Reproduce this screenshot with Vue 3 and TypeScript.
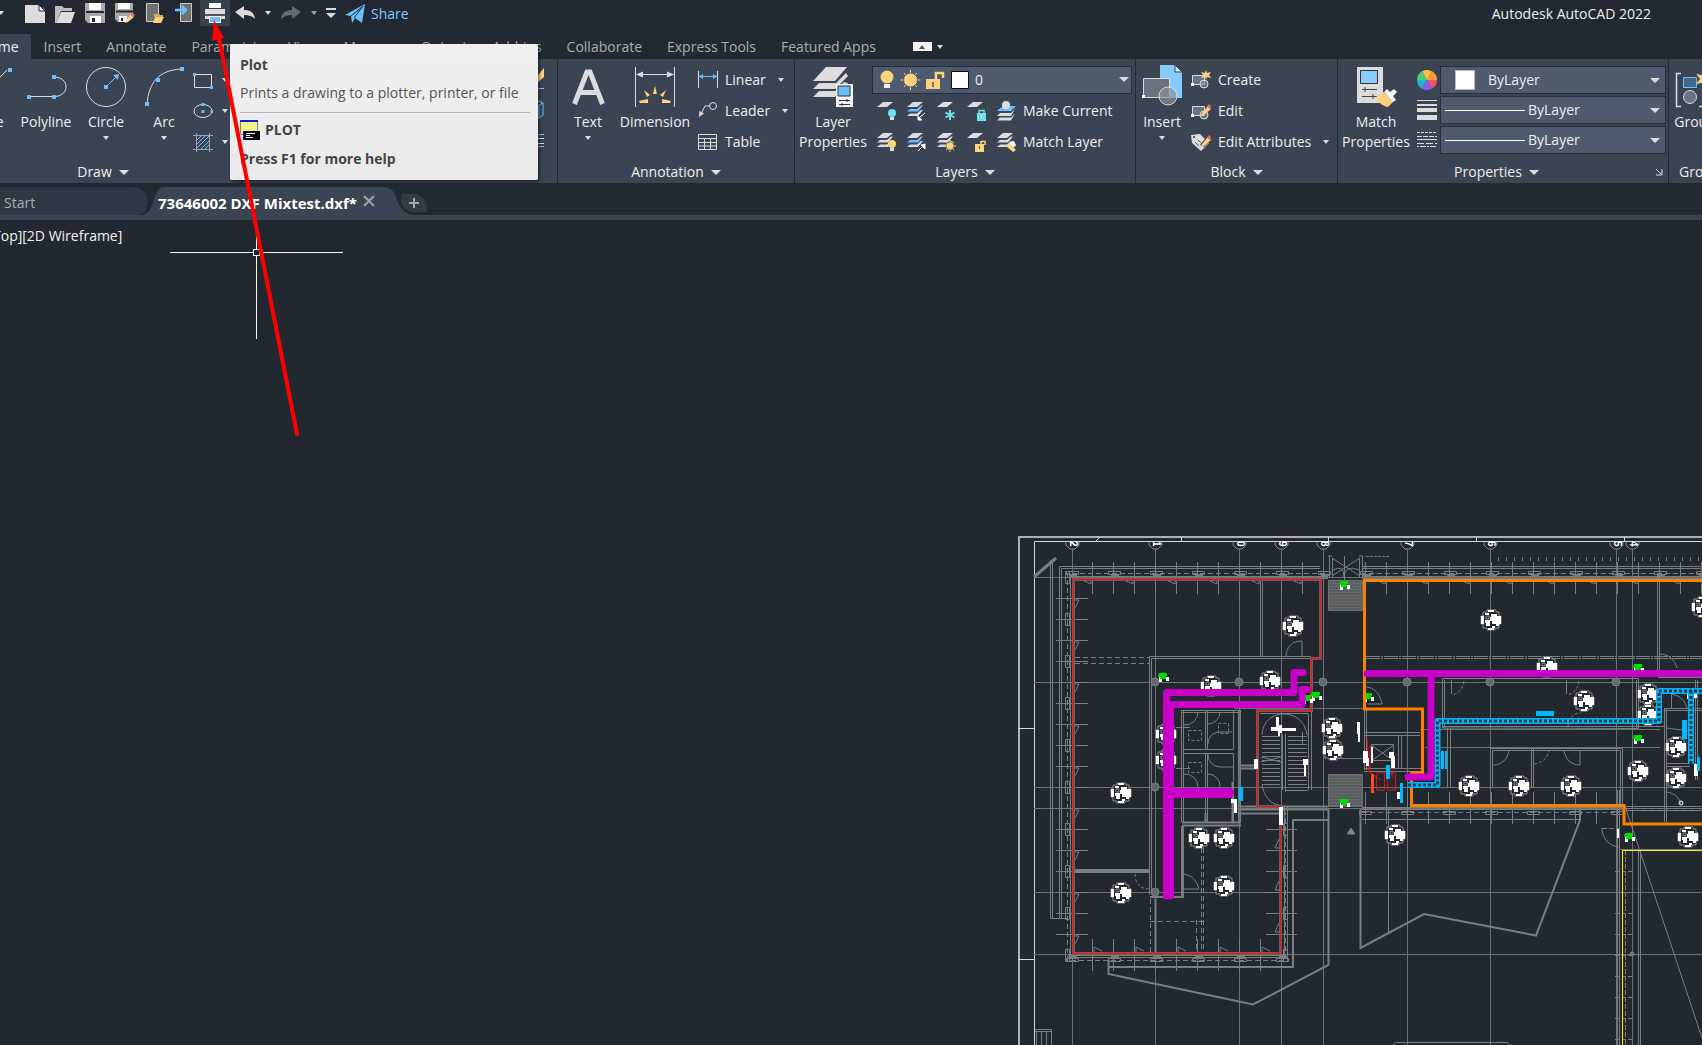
<script setup lang="ts">
import { ref } from 'vue'

const G = '#dcdcdc'
const B = '#6cc0ff'
const Y = '#fdd27a'
const T = '#6fdfe8'

const sheet = (y: number, fill: string) =>
  `<path d="M1 ${y + 5}L7 ${y}H17L11 ${y + 5}Z" fill="${fill}"/>`
const stack = (mid: string) =>
  `${sheet(1, G)}<path d="M1 10.500L4 8H11L15 4.500H17L12 10.500Z" fill="${mid}"/><path d="M1 15L4 12.500H11L15 9H17L12 15Z" fill="${G}"/>`
const bulb = (c: string) =>
  `<circle cx="16" cy="12" r="4" fill="${c}"/><path d="M14 16h4v3h-4z" fill="${G}"/>`
const pencil = `<path d="M11 12l6-7 3 3-7 6-3 1z" fill="${Y}"/><path d="M16 5l2-2 2 2-1 3z" fill="#f25e5e"/>`
const blockBase = `<path d="M1.500 5.500h12v9h-12z" fill="#6b7280" stroke="${G}"/><circle cx="13" cy="14" r="4" fill="#8a8f98" fill-opacity=".6" stroke="${G}"/><path d="M0 13h3v3H0z" fill="#fff"/>`

const icons: Record<string, string> = {
  fresh: `<path d="M0 2h14l6 5v13H0z" fill="${G}"/><path d="M14 2v6h6z" fill="#fff" stroke="#222933"/>`,
  open: `<path d="M0 3h7l2 2h8v3H6L1 20H0z" fill="#bdbdbd"/><path d="M6 9h14l-4 11H1z" fill="${G}"/>`,
  save: `<path d="M0 0h20v20H3l-3-3z" fill="#aaa"/><path d="M4 0h12v7H4z" fill="#fff"/><path d="M1 9h18" stroke="#222933" stroke-width="2"/><path d="M5 13h11v7H5z" fill="#fff"/><path d="M7 15h3v4H7z" fill="#222933"/>`,
  saveAs: `<path d="M0 0h18v10l-8 9H3l-3-3z" fill="#aaa"/><path d="M3 0h12v6H3z" fill="#fff"/><path d="M1 8.500h17" stroke="#222933" stroke-width="2"/><path d="M4 13h8v6H4z" fill="#fff"/><path d="M6 15h2v3H6z" fill="#222933"/><path d="M11 17l5-6 3 3-6 5-3 1z" fill="${Y}"/><path d="M15.500 11.500l2-2 2.500 2.500-2 2z" fill="#f25e5e"/>`,
  openWeb: `<path d="M1.500.500h12v18h-12z" fill="#707070" stroke="#c9c9c9"/><path d="M9 11h5l1 1h3v2H9z" fill="#d9a94e"/><path d="M10 14h9l-3 6H8z" fill="${Y}"/>`,
  saveWeb: `<path d="M5.500.500h11v18h-11z" fill="#707070" stroke="#c9c9c9"/><path d="M0 7h10M7 3l4 4-4 4" stroke="${B}" stroke-width="2.500" fill="none"/>`,
  plot: `<path d="M4 0h12v5H4z" fill="#fff"/><path d="M0 6h20v10H0z" fill="${G}"/><path d="M0 11h20v2H0z" fill="#555"/><path d="M4 13h12v7H4z" fill="#fff"/><path d="M5 14h10v5H5z" fill="${B}"/>`,
  undo: `<path d="M0 9l9-6v4c6 0 10 2 11 9-3-3-6-4-11-4v4z" fill="${G}"/>`,
  redo: `<path d="M20 9l-9-6v4C5 7 1 9 0 16c3-3 6-4 11-4v4z" fill="#666b74"/>`,
  customise: `<path d="M0 5h10v2H0z" fill="${G}"/><path d="M0 10h10l-5 5z" fill="${G}"/>`,
  plane: `<path d="M0 11L20 0l-3 19-7-5-3 5-1-7z" fill="${B}"/><path d="M6 12L18 2 9 14" stroke="#222933" fill="none"/>`,
  rect: `<path d="M1.500 4.500h17v13h-17z" fill="none" stroke="${G}"/><path d="M0 3h3v3H0zM17 16h3v3h-3z" fill="${B}"/>`,
  ellipse: `<ellipse cx="10" cy="10" rx="9" ry="6.500" fill="none" stroke="${G}"/><path d="M8.500 2h3v3h-3zM8.500 9h3v3h-3zM17.500 9h3v3h-3z" fill="${B}"/>`,
  hatch: `<path d="M3.500 1v19M16.500 1v19M0 3.500h20M0 17.500h20" stroke="#9aa1ad"/><path d="M4 8l4-4M4 12l8-8M4 16l12-12M8 17l8-8M12 17l4-4" stroke="${B}"/>`,
  linear: `<path d="M.5 1v17M19.500 1v17" stroke="${G}"/><path d="M1 6.500h18" stroke="${B}"/><path d="M1 6.500l4-2.500v5zM19 6.500L15 4v5z" fill="${B}"/>`,
  leader: `<circle cx="15" cy="5" r="3.500" fill="none" stroke="${G}"/><path d="M11.500 5H7L3 13" fill="none" stroke="${G}"/><path d="M1 16l.5-6 4.500 2.500z" fill="${G}"/>`,
  table: `<path d="M.5 2.500h18v15H.5zM1 6.500h18M1 10.500h18M1 14h18M6.500 7v11M12.500 7v11" fill="none" stroke="${G}"/>`,
  layOff: sheet(1, G) + bulb(T),
  layIso: stack(B) + `<path d="M19 12l-5 4M12 19v-4l4 4z" stroke="#fff" fill="#fff"/>`,
  layFreeze: sheet(1, G) + `<path d="M14 9v10M9.500 11.500l9 5M18.500 11.500l-9 5" stroke="${T}" stroke-width="2"/>`,
  layLock: sheet(1, G) + `<path d="M11 12h9v8h-9z" fill="${T}"/><path d="M13 12V9.500h5V12" fill="none" stroke="${T}" stroke-width="1.500"/><path d="M15 14h1v3h-1z" fill="#fff"/>`,
  makeCurrent: `<path d="M1 10L7 5h13l-5 5z" fill="${B}"/><circle cx="10" cy="4" r="4" fill="${G}"/><path d="M1 15l3-3h11l4-4-4 7zM1 19.500l3-3h11l4-4-4 7z" fill="${G}"/>`,
  layOn: stack(G) + bulb(Y),
  layUniso: stack(B) + `<path d="M12 19l5-5M19 12v5l-4-4z" stroke="#fff" fill="#fff"/>`,
  layThaw: stack(G) + `<path d="M14 8v12M8 14h12M10 10l8 8M18 10l-8 8" stroke="${Y}"/><circle cx="14" cy="14" r="4" fill="${Y}" stroke="#3b4453" stroke-width=".5"/>`,
  layUnlock: sheet(1, G) + `<path d="M9 12h9v8H9z" fill="${Y}"/><path d="M15 12V9.500h4V13" fill="none" stroke="${Y}" stroke-width="1.500"/><path d="M13 14h1v3h-1z" fill="#555"/>`,
  matchLayer: stack(G) + `<path d="M10 14l4-3 6 7-3 2z" fill="${Y}"/><path d="M13 11l5-2 1 2 1 3-3 1z" fill="#fff"/>`,
  create: blockBase + `<path d="M15 0l1 3 4-1-2 3 2 3-4-1-1 3-1-3-4 1 2-3-2-3 4 1z" fill="${Y}"/>`,
  edit: blockBase + pencil,
  attributes: `<path d="M0 3l9-1 9 9-8 8L1 11z" fill="${G}"/><circle cx="3" cy="5" r="1" fill="#333"/><path d="M4 10l4 4M7 8l4 4" stroke="#555"/><path d="M9 13l8-10 4 4-8 8z" fill="#3b4453"/>${pencil}`,
  wheel: [0, 1, 2, 3, 4, 5]
    .map((i) => `<path d="M10 10L5 1.340A10 10 0 0 1 15 1.340Z" fill="${['#fdc23c', '#ff9a3c', '#ec5565', '#8e5cf5', '#22b3c6', '#4ecb7c'][i]}" transform="rotate(${i * 60} 10 10)"/>`)
    .join(''),
  weights: `<path d="M0 0h20v1H0zM0 4h20v2H0zM0 8h20v4H0zM0 15h20v5H0z" fill="${G}"/>`,
  types: `<path d="M0 2.500h20" stroke="${G}" stroke-dasharray="3 1"/><path d="M0 6.500h20" stroke="${G}" stroke-dasharray="5 1"/><path d="M0 9.500h20" stroke="${G}"/><path d="M0 13.500h20" stroke="${G}" stroke-dasharray="7 2"/><path d="M0 16.500h20" stroke="${G}" stroke-dasharray="2 1 6 1"/>`,
  line: `<path d="M3 38L37 3" stroke="${G}"/><path d="M38 1h4v4h-4zM0 36h4v4H0z" fill="${B}"/>`,
  polyline: `<path d="M3 29.500h25M28 10c16 0 16 19.500 0 19.500" fill="none" stroke="${G}"/><path d="M1 28h4v4H1zM26 28h4v4h-4zM26 8h4v4h-4z" fill="${B}"/>`,
  circle: `<circle cx="20" cy="20" r="19.500" fill="none" stroke="${G}"/><path d="M20 20l10-10" stroke="${B}"/><path d="M18 18h4v4h-4zM33 7l-1 6-5-5z" fill="${B}"/>`,
  arc: `<path d="M3 37C5 16 14 3 38 2" fill="none" stroke="${G}"/><path d="M1 35h4v4H1zM12 11h4v4h-4zM36 0h4v4h-4z" fill="${B}"/>`,
  textA: `<path d="M6.500 37L19 5h3l12.500 32M11 25.500h19" fill="none" stroke="${G}" stroke-width="5"/>`,
  dimension: `<path d="M.5 0v40M39.500 0v40M2 7.500h36" stroke="${G}"/><path d="M1 7.500l7-3v6zM39 7.500l-7-3v6z" fill="${G}"/><path d="M20 19l2 8h-4zM9 23l6 5-3 2zM31 23l-6 5 3 2zM4 34l9-2v4H5zM36 34l-9-2v4h8z" fill="${Y}"/>`,
  layerProps: `<path d="M0 14L13 0h21L22 14z" fill="${G}"/><path d="M0 22l6-6h17L33 6l2 3-13 13zM0 30l6-6h17l8-9 4 1-13 14z" fill="${G}"/><path d="M23 17h17v23H23z" fill="#f4f4f4"/><path d="M25 19h12v10H25z" fill="${B}" stroke="#333"/><path d="M26 33.500h11M26 37.500h11M34 32v3M29 36v3" stroke="#333"/>`,
  insert: `<path d="M18-2h15l7 7v26H18z" fill="#86ccff"/><path d="M33-2v7h7z" fill="#d5ecff" stroke="#3b4453"/><path d="M1.500 11.500h26v19h-26z" fill="#6b7280" stroke="${G}"/><circle cx="26" cy="29" r="9" fill="#8a8f98" fill-opacity=".7" stroke="${G}"/><path d="M0 28h3v3H0z" fill="#fff"/>`,
  match: `<path d="M1 0h26v36H1z" fill="${G}"/><path d="M4.500 3.500h17v13h-17z" fill="#86ccff" stroke="#333"/><path d="M6 22.500h15M6 29.500h15M9 20v5M17 27v5" stroke="#444"/><path d="M20 30l8-5 9 10-5 5c-6-1-10-5-12-10z" fill="${Y}"/><path d="M28 25l3-3 3 3 4-3 3 3-4 4 3 4-3 2z" fill="#fff"/>`,
  group: `<path d="M6 6.500H1.500v33H6M24 39.500h8" fill="none" stroke="${G}" stroke-width="1.500"/><path d="M8.500 10.500h13v10h-13z" fill="#41688c" stroke="${B}"/><circle cx="15" cy="30" r="6.500" fill="#6b7280" stroke="${G}"/><path d="M29 2l2 6 6-1-4 5 4 5-6-1-2 6-2-6-6 1 4-5-4-5 6 1z" fill="${Y}"/>`,
  plotCmd: `<path d="M.5.500h17v14H.5z" fill="#f4f08a" stroke="#8a8a70"/><path d="M0 0h18v2H0z" fill="#0a20c8"/><path d="M3 11h17v9H3z" fill="#050510"/><path d="M3 11h1v9H3z" fill="#0a20c8"/><path d="M6 13.500h9M6 15.500h4M6 17.500h7" stroke="#fff"/>`,
}

const quick = ['fresh', 'open', 'save', 'saveAs', 'openWeb', 'saveWeb']
const menu = ['Home', 'Insert', 'Annotate', 'Parametric', 'View', 'Manage', 'Output', 'Add-ins', 'Collaborate', 'Express Tools', 'Featured Apps']
const layerRows = [
  { icons: ['layOff', 'layIso', 'layFreeze', 'layLock'], main: 'makeCurrent', label: 'Make Current' },
  { icons: ['layOn', 'layUniso', 'layThaw', 'layUnlock'], main: 'matchLayer', label: 'Match Layer' },
]
const layer = ref('0')
const color = ref('ByLayer')
const weight = ref('ByLayer')
const lineType = ref('ByLayer')

/* Floor plan, in drawing units */
const range = (from: number, to: number, step: number) =>
  Array.from({ length: Math.floor((to - from) / step) + 1 }, (_, i) => from + i * step)

const axes = [
  { x: 1072, n: '2' }, { x: 1155, n: '1' }, { x: 1239, n: '0' }, { x: 1281, n: '9' }, { x: 1323, n: '8' },
  { x: 1407, n: '7' }, { x: 1490, n: '6' }, { x: 1616, n: '5' }, { x: 1632, n: '4' },
]
const axisRows = [682, 787, 808, 892, 954]
const topPosts = range(1072, 1702, 42)
const sidePosts = range(577, 956, 42)
const bottomPosts = range(1072, 1290, 42)
const topTicks = range(1092, 1310, 21).concat(range(1365, 1702, 21))
const sideTicks = range(598, 940, 21)
const bottomTicks = range(1092, 1270, 21)
const midTicks = range(1365, 1600, 21)
const treads = range(736, 786, 4)
const columns = [[1155, 682], [1239, 682], [1323, 682], [1407, 682], [1490, 682], [1616, 682], [1155, 787], [1155, 892]]
const chairs = [
  [1293, 626], [1211, 686], [1270, 681], [1332, 728], [1333, 750], [1166, 734], [1166, 760], [1121, 793],
  [1121, 893], [1199, 838], [1224, 838], [1224, 886], [1491, 620], [1547, 667], [1584, 701], [1648, 694],
  [1648, 715], [1676, 747], [1676, 778], [1638, 771], [1702, 607], [1469, 786], [1519, 786], [1571, 786],
  [1395, 835], [1688, 837],
]
const plants = [[1344, 584], [1163, 676], [1316, 695], [1307, 698], [1638, 667], [1368, 696], [1638, 738], [1344, 802], [1629, 836], [1691, 693]]
const cyanBlocks = [
  [1536, 711, 18, 5], [1441, 751, 3, 18], [1445, 751, 2, 18], [1682, 720, 5, 19], [1697, 757, 3, 14],
  [1386, 765, 4, 14], [1400, 783, 3, 20], [1239, 787, 4, 14],
]
const whiteBlocks = [
  [1357, 722, 3, 12], [1358, 732, 2, 10], [1363, 751, 5, 12], [1366, 758, 3, 8], [1371, 747, 2, 16], [1389, 752, 5, 6],
  [1391, 756, 4, 12], [1254, 759, 4, 10], [1303, 759, 5, 6], [1304, 764, 2, 12], [1231, 799, 6, 4], [1234, 802, 3, 11],
  [1279, 807, 4, 18], [1617, 829, 2, 9], [1694, 764, 4, 12], [1397, 792, 3, 7],
]
</script>

<template>
  <div class="app">
    <header class="quick">
      <button class="mini lead" aria-label="Application menu"><i class="caret"></i></button>
      <button v-for="q in quick" :key="q" class="q" :aria-label="q"><svg class="s" viewBox="0 0 20 20" v-html="icons[q]"></svg></button>
      <button class="q on" aria-label="Plot"><svg class="s" viewBox="0 0 20 20" v-html="icons.plot"></svg></button>
      <button class="q" aria-label="Undo"><svg class="s" viewBox="0 0 20 20" v-html="icons.undo"></svg></button>
      <button class="mini" aria-label="Undo list"><i class="caret"></i></button>
      <button class="q" aria-label="Redo"><svg class="s" viewBox="0 0 20 20" v-html="icons.redo"></svg></button>
      <button class="mini" aria-label="Redo list"><i class="caret dim"></i></button>
      <button class="mini cust" aria-label="Customize"><svg viewBox="0 0 10 20" v-html="icons.customise"></svg></button>
      <button class="share"><svg class="s" viewBox="0 0 20 20" v-html="icons.plane"></svg>Share</button>
      <h1>Autodesk AutoCAD 2022</h1>
    </header>

    <nav class="menu">
      <button v-for="(m, i) in menu" :key="m" :class="{ active: i === 0 }">{{ m }}</button>
      <button class="collapse" aria-label="Minimize ribbon"><span><i></i></span><i class="caret"></i></button>
    </nav>

    <section class="ribbon">
      <div class="panel draw">
        <div class="body">
          <button class="big line"><svg viewBox="0 0 40 40" v-html="icons.line"></svg>Line</button>
          <button class="big poly"><svg viewBox="0 0 40 40" v-html="icons.polyline"></svg>Polyline</button>
          <button class="big"><svg viewBox="0 0 40 40" v-html="icons.circle"></svg>Circle<i class="caret"></i></button>
          <button class="big"><svg viewBox="0 0 40 40" v-html="icons.arc"></svg>Arc<i class="caret"></i></button>
          <div class="rows">
            <button v-for="n in ['rect', 'ellipse', 'hatch']" :key="n" class="row" :aria-label="n">
              <svg class="s" viewBox="0 0 20 20" v-html="icons[n]"></svg><i class="caret"></i>
            </button>
          </div>
        </div>
        <button class="title">Draw<i class="caret wide"></i></button>
      </div>

      <div class="panel modify">
        <svg viewBox="0 0 20 93">
          <path d="M4 16L14 4v9l-7 6z" fill="#fdd27a" />
          <path d="M0 24.500h14M0 70.500h14M0 82.500h14" stroke="#6cc0ff" />
          <path d="M0 74.500h14M0 79.500h14" stroke="#dcdcdc" />
          <path d="M4 40l5-3 4 2v12l-4 3-5-2zM9 54V41l4-2" fill="none" stroke="#6cc0ff" />
        </svg>
      </div>

      <div class="panel annotation">
        <div class="body">
          <button class="big text-btn"><svg viewBox="0 0 40 40" v-html="icons.textA"></svg>Text<i class="caret"></i></button>
          <button class="big dim-btn"><svg viewBox="0 0 40 40" v-html="icons.dimension"></svg>Dimension</button>
          <div class="rows">
            <button class="row"><svg class="s" viewBox="0 0 20 20" v-html="icons.linear"></svg>Linear<i class="caret"></i></button>
            <button class="row"><svg class="s" viewBox="0 0 20 20" v-html="icons.leader"></svg>Leader<i class="caret"></i></button>
            <button class="row"><svg class="s" viewBox="0 0 20 20" v-html="icons.table"></svg>Table</button>
          </div>
        </div>
        <button class="title">Annotation<i class="caret wide"></i></button>
      </div>

      <div class="panel layers">
        <div class="body">
          <button class="big two"><svg viewBox="0 0 40 40" v-html="icons.layerProps"></svg>Layer<br />Properties</button>
          <div class="rows grow">
            <div class="row">
              <label class="pick layer-pick">
                <svg viewBox="0 0 100 20">
                  <circle cx="8" cy="7" r="6.500" fill="#fdd27a" /><path d="M5 14h6v4H5z" fill="#f2f2f2" />
                  <path d="M31.500 0v20M21.500 10h20M25 3l13 14M38 3L25 17" stroke="#fdd27a" /><circle cx="31.500" cy="10" r="7" fill="#fdd27a" stroke="#4e5a6e" />
                  <path d="M47 9h14v10H47z" fill="#fdd27a" /><path d="M57 9V3h7v5" fill="none" stroke="#fdd27a" stroke-width="2.500" /><path d="M53 12h2v5h-2z" fill="#777" />
                  <path d="M72.500 1.500h17v17h-17z" fill="#fff" stroke="#111" />
                </svg>
                <select v-model="layer" aria-label="Layer"><option>0</option></select>
                <i class="caret wide"></i>
              </label>
            </div>
            <div v-for="r in layerRows" :key="r.label" class="row tools">
              <button v-for="n in r.icons" :key="n" :aria-label="n"><svg class="s" viewBox="0 0 20 20" v-html="icons[n]"></svg></button>
              <button><svg class="s" viewBox="0 0 20 20" v-html="icons[r.main]"></svg>{{ r.label }}</button>
            </div>
          </div>
        </div>
        <button class="title">Layers<i class="caret wide"></i></button>
      </div>

      <div class="panel block">
        <div class="body">
          <button class="big"><svg viewBox="0 0 40 40" v-html="icons.insert"></svg>Insert<i class="caret"></i></button>
          <div class="rows">
            <button class="row"><svg class="s" viewBox="0 0 20 20" v-html="icons.create"></svg>Create</button>
            <button class="row"><svg class="s" viewBox="0 0 20 20" v-html="icons.edit"></svg>Edit</button>
            <button class="row"><svg class="s" viewBox="0 0 20 20" v-html="icons.attributes"></svg>Edit Attributes<i class="caret"></i></button>
          </div>
        </div>
        <button class="title">Block<i class="caret wide"></i></button>
      </div>

      <div class="panel properties">
        <div class="body">
          <button class="big two"><svg viewBox="0 0 40 40" v-html="icons.match"></svg>Match<br />Properties</button>
          <div class="props">
            <div class="prop">
              <svg class="s" viewBox="0 0 20 20" v-html="icons.wheel"></svg>
              <label class="pick"><span class="swatch"></span><select v-model="color" class="near" aria-label="Object color"><option>ByLayer</option></select><i class="caret wide"></i></label>
            </div>
            <div class="prop">
              <svg class="s" viewBox="0 0 20 20" v-html="icons.weights"></svg>
              <label class="pick"><span class="sample"></span><select v-model="weight" aria-label="Lineweight"><option>ByLayer</option></select><i class="caret wide"></i></label>
            </div>
            <div class="prop">
              <svg class="s" viewBox="0 0 20 20" v-html="icons.types"></svg>
              <label class="pick"><span class="sample"></span><select v-model="lineType" aria-label="Linetype"><option>ByLayer</option></select><i class="caret wide"></i></label>
            </div>
          </div>
        </div>
        <div class="foot">
          <button class="title">Properties<i class="caret wide"></i></button>
          <button class="launch" aria-label="Properties palette"><svg viewBox="0 0 8 8"><path d="M1 1l5 5M7 1v6H1" fill="none" stroke="#dcdcdc" /></svg></button>
        </div>
      </div>

      <div class="panel groups">
        <div class="body"><button class="big"><svg viewBox="0 0 40 40" v-html="icons.group"></svg>Group</button></div>
        <button class="title">Groups</button>
      </div>
    </section>

    <nav class="docs">
      <button class="start">Start</button>
      <div class="doc">
        <svg viewBox="0 0 272 28" preserveAspectRatio="none"><path d="M0 28C8 26 9 18 12 9Q15 0 22 0H240Q250 0 253 10Q258 28 272 28Z" fill="#3b4453" /></svg>
        <button class="name">73646002 DXF Mixtest.dxf*</button>
        <button class="close" aria-label="Close drawing"><svg viewBox="0 0 12 12"><path d="M1 1l10 10M11 1L1 11" stroke="#9ea3ab" stroke-width="2" /></svg></button>
      </div>
      <button class="plus" aria-label="New drawing"><svg viewBox="0 0 10 10"><path d="M5 0v10M0 5h10" stroke="#a2a6ad" stroke-width="2" /></svg></button>
    </nav>

    <main class="canvas">
      <svg class="plan" viewBox="0 220 1702 825" preserveAspectRatio="xMinYMin slice" fill="none">
        <defs>
          <pattern id="slab" width="3" height="3" patternUnits="userSpaceOnUse"><path d="M0 0h3v3H0z" fill="#5a5e5f" /><path d="M0 1.500h3" stroke="#666a6a" /></pattern>
          <g id="chair">
            <path d="M-4-10H5V-8H8V-4H10V4H8V8H4V10H-4V8H-8V4H-10V-4H-8V-8H-4Z" fill="#222830" stroke="#8c8f90" />
            <path d="M-3-10H3V-8H-3ZM-3 8H3V10H-3ZM0-6H6V-4H10V4H8V6H5V4H1V1H-1V-3H0ZM-10-4H-7V4H-10ZM-6-7H-2V-5H-6ZM-6 0H-1V6H-5V3H-6ZM1 6H4V8H1Z" fill="#fff" />
            <path d="M-5-4H-2V-1H-5Z" stroke="#8c8f90" />
          </g>
        </defs>

        <g stroke="#d4d6d8">
          <path d="M1702 537H1019V1045" stroke="#aeb1b4" stroke-width="2" />
          <path d="M1702 541.500H1034.500V1045" stroke-width="1" />
          <path d="M1018 728.500H1034M1018 959.500H1034M1096 541l4-4M1181.500 537v4M1328.500 537v4M1476.500 537v4M1624.500 537v4" />
        </g>

        <g stroke="#6e7173">
          <path v-for="a in axes" :key="a.x" :d="`M${a.x + .5} 549V1045`" />
          <path v-for="y in axisRows" :key="y" :d="`M1034 ${y + .5}H1702`" />
          <path d="M1034 577.500H1702M1234 708.500H1370M1332 758.500H1364M1420 729.500H1660M1425 747.500H1660M1360 708.500H1364" />
        </g>
        <g v-for="a in axes" :key="'n' + a.x">
          <path :d="`M${a.x - 6} 542v3l4 4h5l4-4v-3`" stroke="#84878a" />
          <text :transform="`translate(${a.x - 2} 541) rotate(90)`" class="axis">{{ a.n }}</text>
        </g>

        <g stroke="#7b7e7f">
          <path d="M1034 577l22-19" stroke-width="3" />
          <path d="M1320 566.500H1059.500V918M1320 568.500H1061.500V918M1362 566.500H1702M1362 568.500H1702M1050.500 560V918.500H1067M1052.500 560V918" />
          <path d="M1702 576.500H1362M1702 578.500H1362M1328 576.500H1070.500V956M1328 578.500H1072.500V953M1068 957.500H1287.500V807M1068 955.500H1284.500V807" />
          <path d="M1702 573.500H1362M1325 573.500H1067.500V960.500H1285.500V812" stroke-dasharray="5 3" />
          <path v-for="x in topTicks" :key="'t' + x" :d="`M${x + .5} 562V594`" />
          <path v-for="x in topTicks.filter((_, i) => i % 2 === 0)" :key="'w' + x" :d="`M${x - 10} 580l9 4v-4`" />
          <path v-for="y in sideTicks" :key="'s' + y" :d="`M1056 ${y + .5}H1088`" />
          <path v-for="y in sideTicks.filter((_, i) => i % 2 === 0)" :key="'v' + y" :d="`M1074 ${y + 2}h5l-4 8`" />
          <path v-for="y in sideTicks.filter(v => v > 820)" :key="'r' + y" :d="`M1266 ${y + .5}H1297`" />
          <path v-for="y in [848, 890, 932]" :key="'rv' + y" :d="`M1279 ${y - 9}l-4 9h5`" />
          <path v-for="x in bottomTicks" :key="'b' + x" :d="`M${x + .5} 939V971`" />
          <path v-for="x in bottomTicks.filter((_, i) => i % 2 === 0)" :key="'bv' + x" :d="`M${x + 2} 952v-5l8 4`" />
          <path v-for="x in midTicks" :key="'m' + x" :d="`M${x + .5} 792V824`" />
          <path v-for="x in topPosts" :key="'tp' + x" :d="`M${x - 5.5} 571.500h12v3h-12zM${x - 3} 575.500h8`" />
          <path v-for="y in sidePosts" :key="'sp' + y" :d="`M1065.500 ${y - 5.5}h4v12h-4z`" />
          <path v-for="y in sidePosts.filter(v => v > 820)" :key="'rp' + y" :d="`M1283.500 ${y - 5.5}h4v12h-4z`" />
          <path v-for="x in bottomPosts" :key="'bp' + x" :d="`M${x - 5.5} 958.500h12v3h-12zM${x - 3} 956.500h8`" />
          <path v-for="x in range(1365, 1620, 42)" :key="'mp' + x" :d="`M${x - 5.5} 811.500h12v3h-12zM${x - 3} 809.500h8`" />
          <path d="M1490 559H1702" stroke-width="4" stroke-dasharray="1 7" />
          <path d="M1366 556.500H1390" stroke-dasharray="3 1" />
        </g>

        <g stroke="#7b7e7f">
          <path d="M1075 657.500H1149M1075 663.500H1149M1196.500 920V952M1201.500 848V950M1203.500 848V950M1150.500 899V952M1150 921.500H1203" stroke-dasharray="5 3" />
          <path d="M1149.500 895V656.500H1311M1151.500 895V658.500H1311M1260.500 580V657M1262.500 580V657M1286 657c0-10 6-16 16-16v16" />
          <path d="M1155.500 899V952M1073 870H1150M1073 872H1150M1150 897H1183V826M1182 896V826" stroke-width="2" />
          <path d="M1183 874c9 1 14 7 16 15h-16" />
          <path d="M1135 874c0 10 6 15 14 15" stroke-dasharray="3 2" />
          <path d="M1181.500 710V822M1183.500 710V822M1205.500 710V749M1207.500 710V749M1205.500 753V822M1207.500 753V822M1233.500 710V749.500H1183M1233.500 822V753.500H1183M1182 710.500H1240M1182 712.500H1240" />
          <path d="M1238.500 710V822M1240.500 710V822M1184 725a13 13 0 0 0 14-13M1208 724a12 12 0 0 0 12-12M1208 744a12 12 0 0 1 10-12h14M1208 754a12 12 0 0 0 12 13h13M1184 774a13 13 0 0 1 14 13M1208 774a12 12 0 0 1 12 13M1176 727.500H1190M1176 768.500H1190" />
          <path d="M1188.500 730.500h13v10h-13zM1188.500 762.500h13v10h-13zM1218.500 723.500h10v10h-10z" stroke-dasharray="3 2" />
          <path d="M1182 822.500H1241M1182 825.500H1241" stroke-width="2" />
          <path d="M1240 765.500H1257M1240 768.500H1257M1240 806.500H1329M1240 809.500H1329M1240 813.500H1280M1205.500 813V822M1232.500 782V822" stroke-width="2" />
          <path d="M1258 711.500H1311.500V790M1260 713.500H1308.500V790M1262 735c1-28 42-28 45 0M1282.500 734V790M1285.500 734V790M1262 785c2 11 8 19 17 20" />
          <path v-for="y in treads" :key="'st' + y" :d="`M1262 ${y + .5}H1280M1288 ${y + .5}H1307`" />
          <path d="M1261 757l20 5M1261 762l20-5M1285.500 780v12M1302.500 732v12M1286 790.500h22" />
          <path d="M1328 556h4M1359 556h4M1329.500 556V577M1332.500 558V577M1362.500 556V577M1359.500 558V577M1332 558l28 18M1360 558l-28 18M1344.500 556v38M1333 570q11-6 11 7q1-13 15-7" />
        </g>
        <g fill="url(#slab)" stroke="#6e7173">
          <path d="M1328.500 580.500h34v30h-34zM1328.500 774.500h34v32h-34z" />
        </g>

        <g stroke="#7b7e7f">
          <path d="M1366 656.500H1702M1366 658.500H1702" stroke-dasharray="14 1 2 1" />
          <path d="M1657.500 580V677M1659.500 580V677M1658 677.500H1702" />
          <path d="M1442.500 728V678.500H1638.500V728.500ZM1444.500 728V680M1636.500 728V680M1450.500 728V788M1447.500 728V788M1443 726.500H1664" />
          <path d="M1490.500 788V748.500H1622.500V805M1492.500 788V750.500H1620.500V805M1531.500 748V788M1533.500 748V788M1493 765c9 0 15-6 16-15M1564 750c1 9 7 15 16 15v-15" />
          <path d="M1451.500 680v14M1566.500 680v14M1660 654c8 0 15 6 17 14" />
          <path d="M1464 681c-1 8-6 13-12 14M1579 681c-1 8-6 13-12 14M1568 727c0-8 5-14 13-14M1534 764c8-1 14-6 15-14" stroke-dasharray="3 2" />
          <path d="M1664.500 709V822M1666.500 709V822M1664 708.500H1702M1664 710.500H1702M1666 728l24 3M1666 763.500H1690M1666 766.500H1690M1695.500 680V780M1697.500 680V780M1671.500 692V708M1672 694c9 2 14 8 15 14M1665 792c8 0 14 5 16 12" />
          <path d="M1364.500 708V770M1366.500 710V770M1364 732.500H1420M1364 735.500H1420M1398.500 735V768M1401.500 735V768M1364 768.500H1422M1364 771.500H1410M1371.500 744.500h22v16h-22zM1371 745l23 16M1394 745l-23 16" />
          <path d="M1366 687c8 0 15 8 16 17h-14" />
          <path d="M1362 807.500H1622M1362 809.500H1622M1362 819.500H1580M1702 806.500H1626M1702 810.500H1626" />
          <path d="M1362 812.500H1620M1626 808.500H1702" stroke-dasharray="5 3" />
          <path d="M1108.500 960V974L1253 1004.500L1328.500 965V809M1109 967H1293V820H1328M1360.500 809V948L1424 914L1536 935.500L1580 820V809" stroke-width="2" />
          <path d="M1388.500 809V933M1617.500 790V1045M1619.500 790V1045M1638.500 850V1045M1640.500 850V1045M1625 806L1702 1038M1620 849.500H1702" />
          <path d="M1625.500 850V1045M1602 828.500h18" stroke-dasharray="5 2" />
          <path d="M1602 828c0 11 8 19 18 19" />
          <path v-for="y in range(871, 1045, 21)" :key="'y' + y" :d="`M1615 ${y + .5}h5m3 0h2m3 0h4`" />
          <path d="M1035 1029.500H1051.500V1045M1035 1031.500H1051M1036.500 1031V1045M1041.500 1031V1045M1046.500 1031V1045M1393 1045l2-2.500H1508l2 2.500" />
          <path d="M1355 834l-4-6-4 6z" fill="#84878a" />
          <circle v-for="(c, i) in columns" :key="i" :cx="c[0]" :cy="c[1]" r="4" fill="#666a6c" />
          <circle cx="1632" cy="954" r="2" fill="#777" />
          <circle cx="1681" cy="803" r="2" stroke="#fff" />
        </g>

        <g>
          <path d="M1073.500 579.500H1320.500V658.500H1311.500V710.500H1257.500V806.500H1280.500V953.500H1073.500Z" stroke="#7d5658" stroke-width="3" />
          <path d="M1073.500 579.500H1320.500V658.500H1311.500V710.500H1257.500V806.500H1280.500V953.500H1073.500Z" stroke="#f01414" />
        </g>
        <path d="M1367 738l2 35M1370 745v25M1366 770l15 10M1376.500 775v15h8v-16M1387.500 774v16h8v-16M1376 773h19M1392 768v10" stroke="#e81212" />
        <path d="M1372.500 774V793" stroke="#ff4a12" stroke-width="3" />

        <use v-for="(c, i) in chairs" :key="'c' + i" href="#chair" :x="c[0]" :y="c[1]" />
        <rect v-for="(w, i) in whiteBlocks" :key="'wb' + i" :x="w[0]" :y="w[1]" :width="w[2]" :height="w[3]" fill="#fff" />
        <path d="M1276 717h3v8h3v3h14v3h-14v2h-2v3h-2v-5h-7v-4h5z" fill="#fff" />
        <g v-for="(p, i) in plants" :key="'p' + i">
          <path :d="`M${p[0] - 4} ${p[1] + 1}h3v5h-3zM${p[0] + 3} ${p[1] + 1}h3v4h-3z`" fill="#fff" />
          <path :d="`M${p[0] - 4} ${p[1] - 3}h8v3h-1v3h-6v-2h-2z`" fill="#00dc00" />
        </g>

        <path d="M1702 580.500H1364.500V709H1422.500V772.500H1411.500V805.500H1624V824H1702" stroke="#ff8000" stroke-width="3" />
        <path d="M1408 785H1437.500V721H1659V691H1702M1691 691V764" stroke="#00b4f5" stroke-width="6" stroke-linejoin="round" />
        <path d="M1408 785H1437.500V721H1659V691H1702M1691 691V764" stroke="#203848" stroke-width="3" stroke-dasharray="3 2" />
        <rect v-for="(w, i) in cyanBlocks" :key="'cb' + i" :x="w[0]" :y="w[1]" :width="w[2]" :height="w[3]" fill="#00b9ff" />
        <g stroke="#c800c8" stroke-linecap="round" stroke-linejoin="round">
          <path d="M1303 672.500H1294V692.500H1167M1172 704.500H1302V689.500H1307" stroke-width="7" />
          <path d="M1166.500 693V896M1170.500 704V896M1408 777H1431V674" stroke-width="7" />
          <path d="M1174 793H1229" stroke-width="10" />
          <path d="M1367 673.500H1702" stroke-width="7" />
        </g>
        <path d="M1622.500 1045V850.500H1702" stroke="#f5f500" />

        <g stroke="#f4f4f4">
          <path d="M170 252.500H253M260 252.500H343M256.500 220V249M256.500 256V339" />
          <rect x="253.500" y="249.500" width="6" height="6" />
        </g>
      </svg>
      <button class="view">Top][2D Wireframe]</button>
    </main>

    <aside class="tip" role="tooltip">
      <strong>Plot</strong>
      <p>Prints a drawing to a plotter, printer, or file</p>
      <hr />
      <div class="cmd"><svg class="s" viewBox="0 0 20 20" v-html="icons.plotCmd"></svg><strong>PLOT</strong></div>
      <strong>Press F1 for more help</strong>
    </aside>

    <svg class="arrow" viewBox="0 0 320 450">
      <path d="M219 38L297 434" stroke="#f00" stroke-width="4" stroke-linecap="round" />
      <path d="M214 20L224 38L212 41Z" fill="#f00" />
    </svg>
  </div>
</template>

<style>
body { margin: 0; background: #212830; }
</style>

<style scoped>
.app {
  position: relative;
  display: flex;
  flex-direction: column;
  min-height: 100vh;
  overflow: hidden;
  background: #222933;
  color: #eceef0;
  font: 14px/20px "Open Sans", "Noto Sans", sans-serif;
}
button {
  display: flex;
  align-items: center;
  margin: 0;
  padding: 0;
  border: 0;
  background: none;
  color: inherit;
  font: inherit;
  white-space: nowrap;
}
svg { flex: none; display: block; }
.s { width: 20px; height: 20px; }
.caret {
  flex: none;
  width: 0;
  height: 0;
  border: 3px solid transparent;
  border-top: 4px solid #dcdcdc;
  border-bottom: 0;
}
.caret.wide { border-width: 5px 5px 0; }
.caret.dim { border-top-color: #9a9ea5; }

.quick { display: flex; height: 26px; margin-bottom: 8px; }
.q { justify-content: center; width: 30px; }
.q.on { background: #36414f; }
.mini { justify-content: center; width: 16px; }
.mini.lead { justify-content: flex-start; width: 22px; margin-left: -2px; }
.mini.cust { width: 18px; }
.mini.cust svg { width: 10px; height: 20px; }
.share { gap: 6px; margin-left: 5px; padding-top: 1px; color: #7cc8ff; }
.quick h1 { margin: 4px 51px 0 auto; font: inherit; }

.menu { display: flex; height: 25px; margin-left: -34px; color: #a9adb2; }
.menu button { padding: 0 12px 0 13px; }
.menu .active { background: #3b4453; color: #eceef0; }
.menu .collapse { gap: 5px; margin-left: 12px; }
.collapse span { display: flex; align-items: center; justify-content: center; width: 19px; height: 9px; background: #f2f2f2; }
.collapse span i { border: 3px solid transparent; border-top: 0; border-bottom: 4px solid #555; }

.ribbon { display: flex; height: 124px; background: #3b4453; }
.panel { display: flex; flex: none; flex-direction: column; box-sizing: border-box; border-right: 1px solid #222933; }
.body { display: flex; flex: 1; padding-top: 5px; }
.title { justify-content: center; gap: 7px; width: 100%; height: 22px; }
.big { flex: none; flex-direction: column; width: 58px; padding-top: 3px; text-align: center; }
.big svg { width: 40px; height: 40px; margin-bottom: 5px; overflow: visible; }
.big .caret { margin-top: 4px; }
.rows { display: flex; flex-direction: column; }
.row { height: 31px; gap: 7px; display: flex; align-items: center; }
.row .caret { margin-left: 5px; }

.draw { width: 277px; margin-left: -35px; }
.draw .line { width: 50px; }
.draw .poly { width: 62px; }
.draw .row { gap: 4px; }
.modify { width: 316px; align-items: flex-end; padding: 5px 13px 0 0; }
.modify svg { width: 20px; height: 93px; margin-right: -6px; }
.annotation { width: 237px; }
.annotation .text-btn { width: 60px; }
.annotation .dim-btn { width: 74px; }
.annotation .rows { padding-left: 6px; }
.layers { width: 341px; }
.two { width: 76px; }
.grow { flex: 1; margin-left: 1px; }
.tools { padding-left: 4px; gap: 10px; }
.tools button { gap: 7px; }
.block { width: 202px; }
.block .big { width: 52px; }
.block .rows { padding-left: 3px; }
.properties { width: 331px; }
.props { display: flex; flex: 1; flex-direction: column; gap: 2px; padding: 2px 2px 0 3px; }
.prop { display: flex; align-items: center; gap: 3px; }
.foot { display: flex; padding-right: 5px; }
.launch svg { width: 8px; height: 8px; }
.groups { flex: 1; width: 33px; border: 0; overflow: hidden; }
.groups .big { width: 52px; }
.groups .title { justify-content: flex-start; padding-left: 10px; }

.pick { display: grid; flex: 1; align-items: center; grid-template-columns: 1fr 20px; margin-right: 3px; box-sizing: border-box; height: 28px; border: 1px solid #272e39; background: #4e5a6e; }
.prop .pick { margin-right: 0; }
.pick > * { grid-row: 1; grid-column: 1; }
.pick > .caret { grid-column: 2; justify-self: center; }
.pick > svg, .pick > span { z-index: 1; pointer-events: none; }
.pick select { grid-column: 1 / 3; height: 26px; margin: 0; padding: 0 0 0 87px; border: 0; background: none; color: inherit; font: inherit; appearance: none; }
.pick option { background: #4e5a6e; }
.pick select.near { padding-left: 47px; }
.layer-pick svg { width: 100px; height: 20px; margin-left: 6px; }
.layer-pick select { padding-left: 102px; }
.swatch { width: 18px; height: 18px; margin-left: 14px; border: 1px solid #bbb; background: #fff; }
.sample { width: 80px; height: 1px; margin-left: 4px; background: #fff; }

.docs { display: flex; align-items: flex-end; height: 32px; border-bottom: 5px solid #3b4453; }
.start { width: 147px; height: 28px; padding: 3px 0 0 4px; border-radius: 0 14px 10px 0; background: #2f3744; color: #a9adb2; }
.doc { display: grid; grid-template-columns: 220px 52px; align-items: center; width: 272px; height: 28px; margin-left: -4px; }
.doc > svg { grid-area: 1 / 1 / 2 / 3; width: 100%; height: 28px; }
.name { grid-area: 1 / 1; padding: 3px 0 0 15px; color: #fff; font-size: 15px; font-weight: 700; }
.close { grid-area: 1 / 2; }
.close svg { width: 12px; height: 12px; }
.plus { justify-content: center; width: 26px; height: 18px; margin: 0 0 3px -14px; border-radius: 2px 14px 0 12px; background: #323a47; }
.plus svg { width: 10px; height: 10px; }

.canvas { display: grid; flex: 1; grid-template: minmax(0, 1fr) / minmax(0, 1fr); background: #212830; }
.plan { grid-area: 1 / 1; width: 100%; height: 100%; }
.view { grid-area: 1 / 1; align-self: start; justify-self: start; margin: 6px 0 0 -7px; color: #f2f2f2; }
.axis { fill: #fff; font: bold 10px "Liberation Sans", sans-serif; }

.tip { position: absolute; top: 44px; left: 230px; box-sizing: border-box; width: 308px; height: 136px; padding: 11px 8px 0 10px; border-radius: 2px; background: linear-gradient(#f0f0f0, #eaeaea); color: #444; box-shadow: 2px 2px 3px #0006; white-space: nowrap; }
.tip strong { display: block; }
.tip p { margin: 8px 0 9px; color: #555; }
.tip hr { height: 1px; margin: 0 0 7px; border: 0; background: #b5b5b5; }
.cmd { display: flex; align-items: center; gap: 5px; margin-bottom: 9px; }
.arrow { position: absolute; top: 0; left: 0; width: 320px; height: 450px; pointer-events: none; }
</style>
